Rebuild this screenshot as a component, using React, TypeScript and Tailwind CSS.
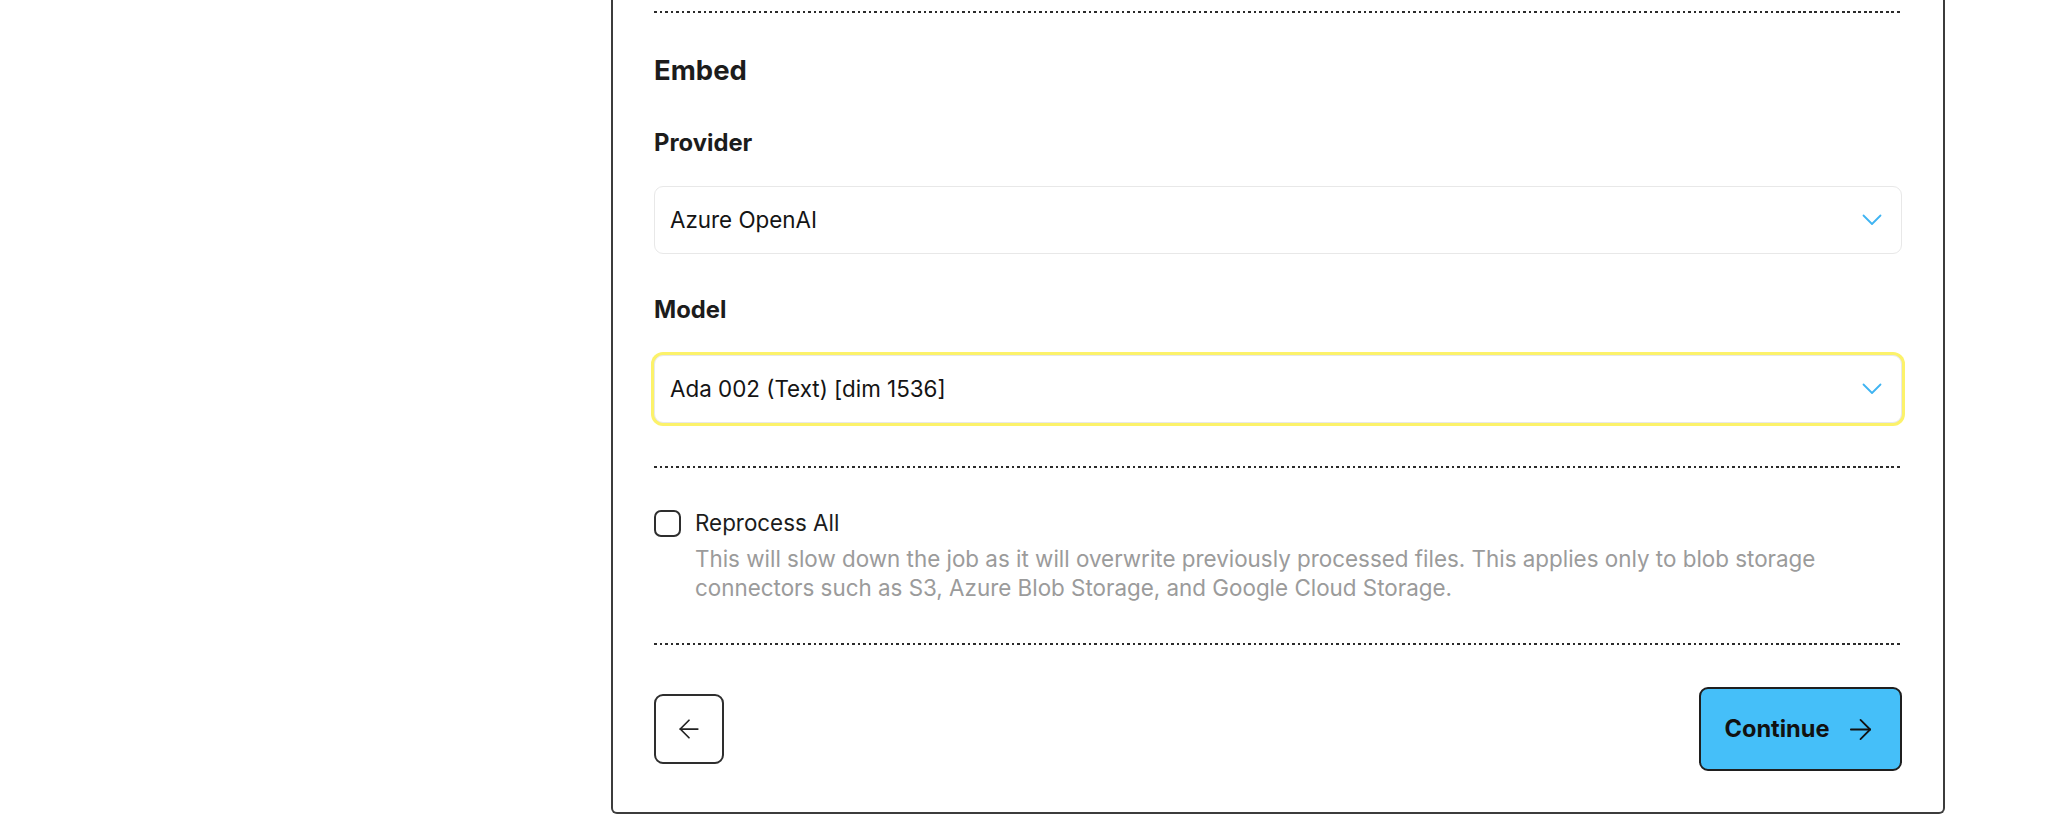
import React from 'react';
import { ArrowLeft, ArrowRight } from 'lucide-react';

const Divider = () => (
    <div className="h-[2px] w-full bg-[repeating-linear-gradient(to_right,#2b2b2b_0_2.5px,transparent_2.5px_5.5px)]" />
);

interface SelectProps {
    value: string;
    focused?: boolean;
}

const SelectBox: React.FC<SelectProps> = ({ value, focused }) => (
    <div
        className={`flex h-[68px] items-center justify-between rounded-[9px] border border-[#e8e8e8] bg-white pl-[15px] pr-[18px] ${focused ? 'shadow-[0_0_0_3px_#fcf26a]' : ''}`}
    >
        <span className="text-[22.4px] text-[#141414]">{value}</span>
        <svg width="20" height="12" viewBox="0 0 20 12" fill="none" className="mr-[1px]">
            <polyline points="1.5,1.5 10,10 18.5,1.5" stroke="#3fb4f2" strokeWidth="1.8" strokeLinecap="round" strokeLinejoin="round" />
        </svg>
    </div>
);

export default function App() {
    return (
        <div className="h-[828px] w-full overflow-hidden bg-white font-['Inter',sans-serif]">
            <div className="ml-[611px] w-[1334px] rounded-b-[6px] border-x-2 border-b-2 border-[#3c3c3c] px-[41px] pb-[41px] pt-[11px]">
                <Divider />

                <h2 className="mt-[39px] text-[27.5px] font-bold leading-[36px] text-[#1c1c1c]">Embed</h2>

                <label className="mt-[40px] block text-[23.8px] font-bold leading-[30px] text-[#1c1c1c]">Provider</label>
                <div className="mt-[28px]">
                    <SelectBox value="Azure OpenAI" />
                </div>

                <label className="mt-[41px] block text-[23.8px] font-bold leading-[30px] text-[#1c1c1c]">Model</label>
                <div className="mt-[30px]">
                    <SelectBox value="Ada 002 (Text) [dim 1536]" focused />
                </div>

                <div className="mt-[43px]">
                    <Divider />
                </div>

                <div className="mt-[40px] flex gap-[14px]">
                    <div className="mt-[2px] h-[27px] w-[27px] shrink-0 rounded-[7px] border-2 border-[#2e2e2e] bg-white" />
                    <div>
                        <div className="text-[22.4px] leading-[30px] text-[#1c1c1c]">Reprocess All</div>
                        <p className="mt-[6px] text-[22.4px] leading-[29px] text-[#9b9b9b]">
                            This will slow down the job as it will overwrite previously processed files. This applies only to blob storage
                            <br />
                            connectors such as S3, Azure Blob Storage, and Google Cloud Storage.
                        </p>
                    </div>
                </div>

                <div className="mt-[41px]">
                    <Divider />
                </div>

                <div className="mt-[42px] flex items-center justify-between">
                    <button className="flex h-[70px] w-[70px] items-center justify-center rounded-[9px] border-2 border-[#2e2e2e] bg-white">
                        <ArrowLeft className="h-[30px] w-[30px] text-[#222]" strokeWidth={1.4} />
                    </button>
                    <button className="flex h-[84px] w-[203px] items-center justify-center gap-[14px] rounded-[9px] border-2 border-[#1f1f1f] bg-[#45bff9] text-[23.6px] font-bold text-[#111]">
                        Continue
                        <ArrowRight className="h-[33px] w-[33px]" strokeWidth={1.3} />
                    </button>
                </div>
            </div>
        </div>
    );
}
